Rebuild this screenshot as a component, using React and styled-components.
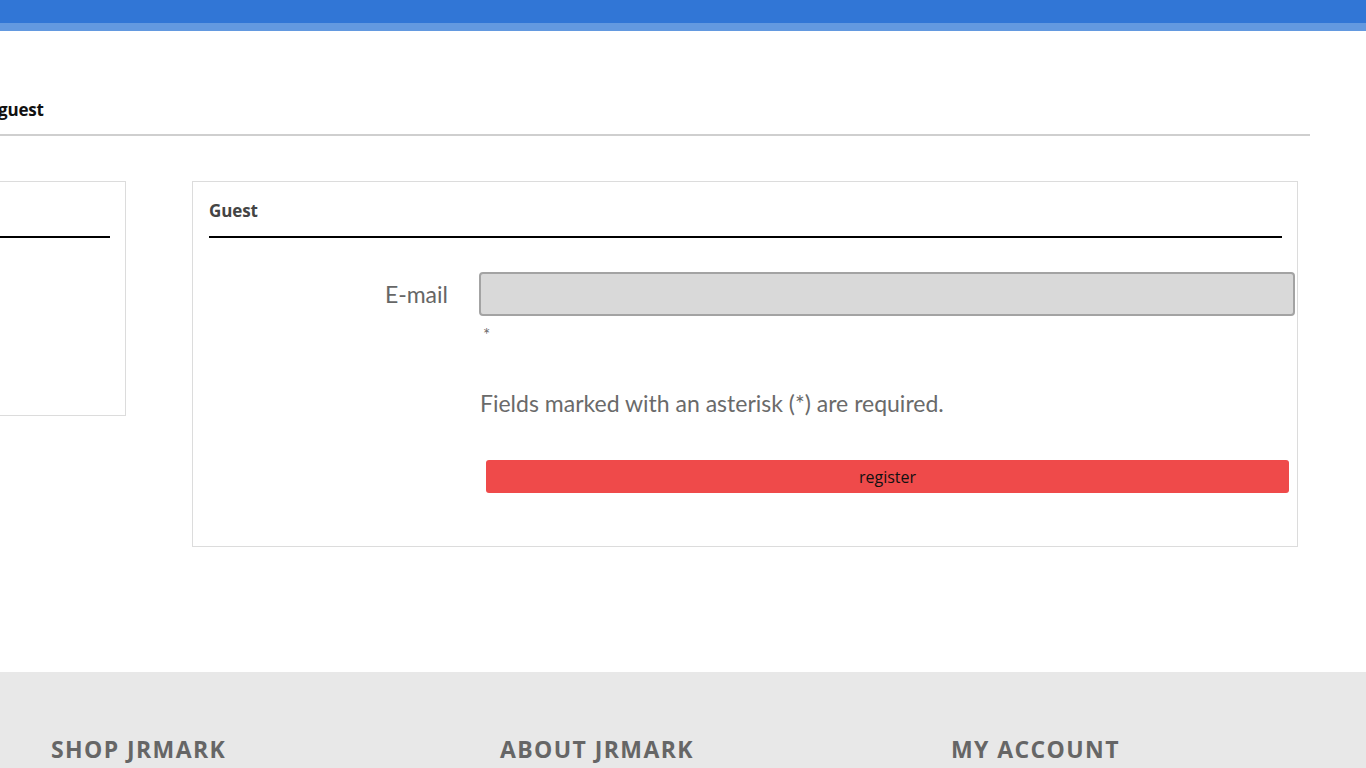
import styled, { createGlobalStyle } from "styled-components"

const Global = createGlobalStyle`
  html, body {
    margin: 0;
    padding: 0;
    background: #fff;
    font-family: "Lato", "Open Sans", sans-serif;
    overflow: hidden;
  }
`

const TopBar = styled.div`
  height: 23px;
  background: #3176d6;
  border-bottom: 8px solid #6399e0;
`

const Main = styled.main`
  width: 1310px;
  padding-top: 69px;
  padding-bottom: 125px;
`

const Crumbs = styled.div`
  margin-left: -2px;
  padding-bottom: 14px;
  border-bottom: 2px solid #cfcfcf;
  font-family: "Open Sans", sans-serif;
  font-size: 17px;
  font-weight: 700;
  letter-spacing: -0.2px;
  color: #111;
  line-height: 20px;
`

const Columns = styled.div`
  display: flex;
  align-items: flex-start;
  gap: 66px;
  margin-top: 45px;
  margin-left: -300px;
`

const Box = styled.section`
  box-sizing: border-box;
  width: ${(p) => p.$width}px;
  height: ${(p) => p.$height}px;
  border: 1px solid #dcdcdc;
  padding: 16px 15px 0 16px;
`

const BoxTitle = styled.h2`
  margin: 0;
  height: 40px;
  box-sizing: border-box;
  padding-top: 3px;
  border-bottom: 2px solid #000;
  font-family: "Open Sans", sans-serif;
  font-size: 17px;
  font-weight: 700;
  letter-spacing: -0.1px;
  color: #444;
  line-height: 20px;
`

const FormRow = styled.div`
  display: flex;
  align-items: center;
  margin-top: 34px;
`

const Label = styled.label`
  width: 239px;
  text-align: right;
  font-size: 23px;
  color: #666;
  padding-right: 31px;
`

const Input = styled.input`
  box-sizing: border-box;
  width: 816px;
  height: 44px;
  margin: 0 -15px 0 0;
  background: #d9d9d9;
  border: 2px solid #a3a3a3;
  border-radius: 4px;
  outline: none;
`

const Hint = styled.div`
  margin-left: ${(p) => p.$indent}px;
  margin-top: ${(p) => p.$top}px;
  font-size: ${(p) => p.$size}px;
  color: #6a6a6a;
  line-height: ${(p) => p.$lh}px;
`

const Button = styled.button`
  display: block;
  width: 803px;
  height: 33px;
  margin: 43px 0 0 277px;
  background: #ef4a4a;
  border: none;
  border-radius: 3px;
  font-family: "Open Sans", sans-serif;
  font-size: 16px;
  color: #111;
  cursor: pointer;
`

const Footer = styled.footer`
  background: #e8e8e8;
  height: 200px;
  display: grid;
  grid-template-columns: 449px 451px 1fr;
  padding: 61px 0 0 51px;
`

const FooterHead = styled.h3`
  margin: 0;
  font-family: "Open Sans", sans-serif;
  font-size: 23px;
  font-weight: 700;
  letter-spacing: 1.4px;
  color: #666;
`

export default function App() {
  return (
    <>
      <Global />
      <TopBar />
      <Main>
        <Crumbs>guest</Crumbs>
        <Columns>
          <Box $width={426} $height={235}>
            <BoxTitle />
          </Box>
          <Box $width={1106} $height={366}>
            <BoxTitle>Guest</BoxTitle>
            <FormRow>
              <Label htmlFor="email">E-mail</Label>
              <Input id="email" type="email" />
            </FormRow>
            <Hint $indent={274} $top={9} $size={17} $lh={20}>*</Hint>
            <Hint $indent={271} $top={44} $size={23} $lh={28}>
              Fields marked with an asterisk (*) are required.
            </Hint>
            <Button>register</Button>
          </Box>
        </Columns>
      </Main>
      <Footer>
        <FooterHead>SHOP JRMARK</FooterHead>
        <FooterHead>ABOUT JRMARK</FooterHead>
        <FooterHead>MY ACCOUNT</FooterHead>
      </Footer>
    </>
  )
}
